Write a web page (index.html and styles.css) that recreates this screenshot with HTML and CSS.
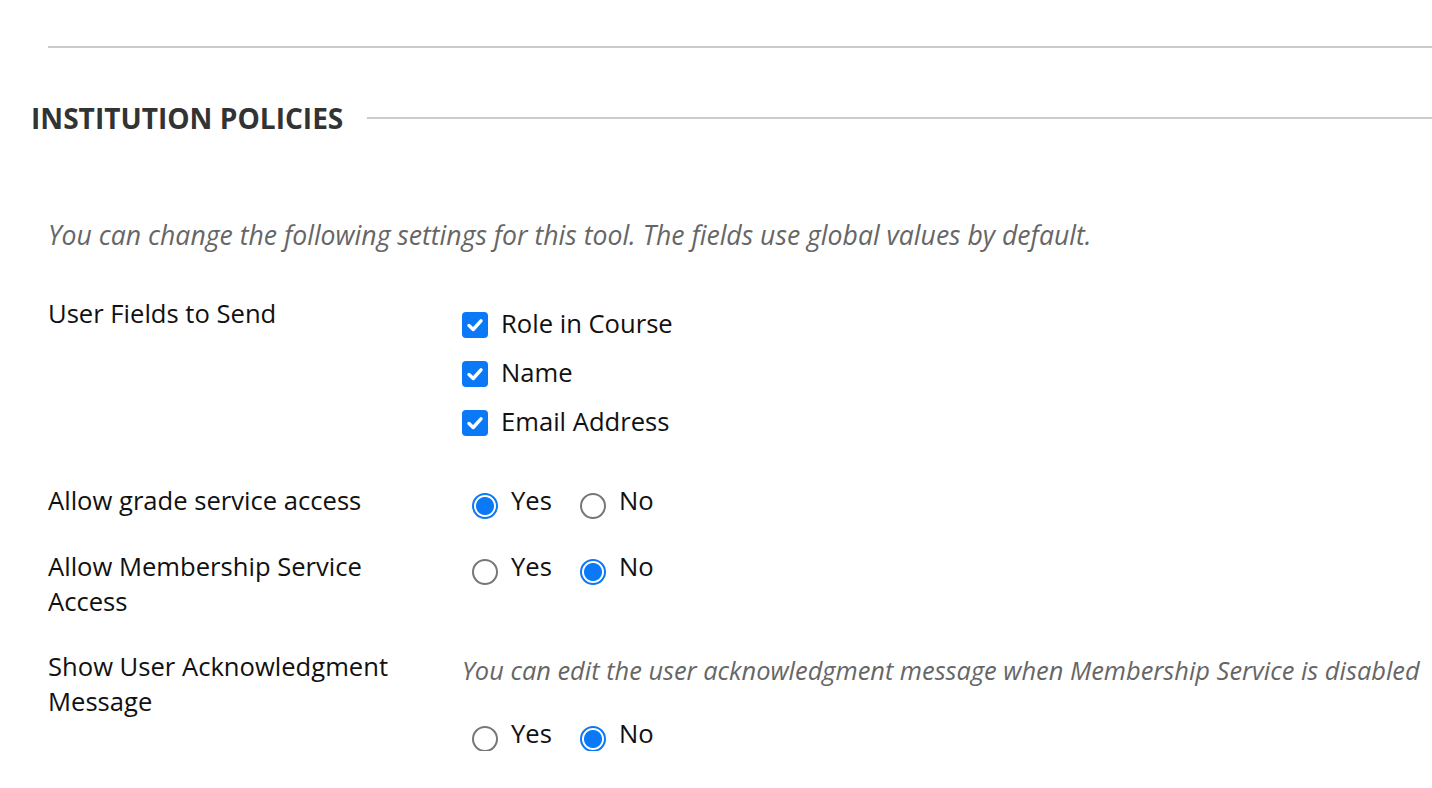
FILE: index.html
```html
<!DOCTYPE html>
<html>
<head>
<meta charset="utf-8">
<link rel="stylesheet" href="styles.css">
</head>
<body>
<div class="page">
  <div class="top-rule"></div>
  <div class="section-head">
    <h2>INSTITUTION POLICIES</h2>
    <div class="head-rule"></div>
  </div>
  <p class="intro">You can change the following settings for this tool. The fields use global values by default.</p>

  <div class="row row-fields">
    <div class="label">User Fields to Send</div>
    <div class="control checks">
      <label class="check"><span class="box"><svg viewBox="0 0 26 26" width="26" height="26"><path d="M7 13.5 L11.2 17.5 L19 8.8" fill="none" stroke="#fff" stroke-width="3.4" stroke-linecap="round" stroke-linejoin="round"/></svg></span>Role in Course</label>
      <label class="check"><span class="box"><svg viewBox="0 0 26 26" width="26" height="26"><path d="M7 13.5 L11.2 17.5 L19 8.8" fill="none" stroke="#fff" stroke-width="3.4" stroke-linecap="round" stroke-linejoin="round"/></svg></span>Name</label>
      <label class="check"><span class="box"><svg viewBox="0 0 26 26" width="26" height="26"><path d="M7 13.5 L11.2 17.5 L19 8.8" fill="none" stroke="#fff" stroke-width="3.4" stroke-linecap="round" stroke-linejoin="round"/></svg></span>Email Address</label>
    </div>
  </div>

  <div class="row row-grade">
    <div class="label">Allow grade service access</div>
    <div class="control radios">
      <label class="radio"><span class="dot on"></span>Yes</label>
      <label class="radio"><span class="dot"></span>No</label>
    </div>
  </div>

  <div class="row row-member">
    <div class="label">Allow Membership Service Access</div>
    <div class="control radios">
      <label class="radio"><span class="dot"></span>Yes</label>
      <label class="radio"><span class="dot on"></span>No</label>
    </div>
  </div>

  <div class="row row-ack">
    <div class="label">Show User Acknowledgment Message</div>
    <div class="control">
      <p class="hint">You can edit the user acknowledgment message when Membership Service is disabled</p>
      <div class="radios">
        <label class="radio"><span class="dot"></span>Yes</label>
        <label class="radio"><span class="dot on"></span>No</label>
      </div>
    </div>
  </div>
</div>
</body>
</html>
```

FILE: styles.css
```css
html, body {
  margin: 0;
  padding: 0;
  background: #fff;
}
body {
  font-family: "Open Sans", "Noto Sans", sans-serif;
  color: #111;
  font-size: 25.6px;
  line-height: 35px;
  overflow: hidden;
}
.page {
  padding-top: 46px;
}
.top-rule {
  margin-left: 48px;
  height: 2px;
  background: #cbcbcb;
}
.section-head {
  display: flex;
  align-items: center;
  margin-top: 52px;
  padding-left: 31px;
}
.section-head h2 {
  margin: 0;
  font-size: 28.1px;
  font-weight: 700;
  color: #333;
  line-height: 36px;
}
.head-rule {
  flex: 1;
  height: 2px;
  background: #cbcbcb;
  margin-left: 24px;
}
.intro {
  margin: 82px 0 0 48px;
  font-style: italic;
  color: #666;
  font-size: 26.6px;
  line-height: 35px;
}
.row {
  display: flex;
  align-items: flex-start;
  padding-left: 48px;
}
.label {
  width: 414px;
  flex: none;
  padding-right: 40px;
  box-sizing: border-box;
}
.row-fields { margin-top: 43px; }
.row-grade { margin-top: 44px; }
.row-member { margin-top: 31px; }
.row-ack { margin-top: 30px; }

.checks {
  display: flex;
  flex-direction: column;
  gap: 14px;
  padding-top: 10px;
}
.check {
  display: flex;
  align-items: center;
  gap: 13px;
}
.box {
  width: 26px;
  height: 26px;
  border-radius: 4px;
  background: #0b78f5;
  display: block;
  position: relative;
  top: 1px;
}
.box svg { display: block; }

.radios {
  display: flex;
  align-items: flex-start;
  gap: 28px;
  padding-left: 10px;
}
.radio {
  display: flex;
  align-items: center;
  gap: 13px;
}
.dot {
  width: 26px;
  height: 26px;
  box-sizing: border-box;
  border-radius: 50%;
  border: 2px solid #777;
  background: #fff;
  position: relative;
  top: 5px;
}
.dot.on {
  border-color: #0b78f5;
  background: radial-gradient(circle, #0b78f5 0 8.5px, #fff 9.5px);
}
.hint {
  margin: 0;
  font-style: italic;
  color: #666;
  font-size: 25.4px;
  padding-top: 4px;
}
.row-ack .radios {
  margin-top: 28px;
}
```
